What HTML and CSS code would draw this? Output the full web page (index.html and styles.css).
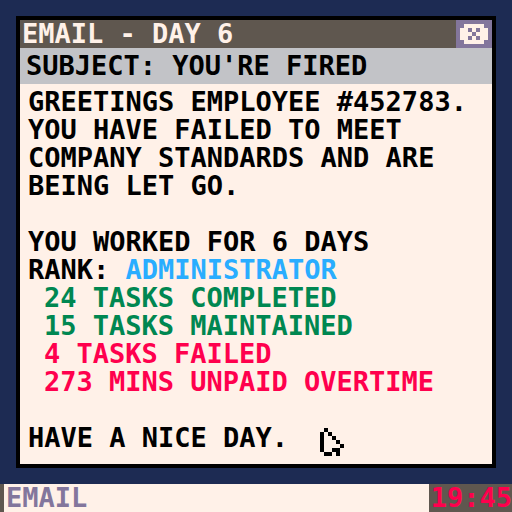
FILE: index.html
```
<!DOCTYPE html>
<html lang="en">
<head>
<meta charset="utf-8">
<title>Email - Day 6</title>
<link rel="stylesheet" href="styles.css">
</head>
<body>
<main class="desktop">
  <section class="window">
    <header class="titlebar">
      <h1 class="title">EMAIL - DAY 6</h1>
      <button class="close" type="button" aria-label="Close">
        <svg viewBox="0 0 7 5" width="28" height="20" shape-rendering="crispEdges" aria-hidden="true">
          <path fill="#fff1e8" d="M1 0h5v1h1v3h-1v1h-5v-1h-1v-3h1z"/>
          <path fill="#83769c" d="M2 1h1v1h-1zM4 1h1v1h-1zM3 2h1v1h-1zM2 3h1v1h-1zM4 3h1v1h-1z"/>
        </svg>
      </button>
    </header>
    <h2 class="subject">SUBJECT: YOU'RE FIRED</h2>
    <div class="message">
      <p>GREETINGS EMPLOYEE #452783.<br>YOU HAVE FAILED TO MEET<br>COMPANY STANDARDS AND ARE<br>BEING LET GO.</p>
      <div class="report">
        <p>YOU WORKED FOR 6 DAYS</p>
        <p>RANK: <span class="rank">ADMINISTRATOR</span></p>
        <ul class="stats">
          <li class="good">24 TASKS COMPLETED</li>
          <li class="good">15 TASKS MAINTAINED</li>
          <li class="bad">4 TASKS FAILED</li>
          <li class="bad">273 MINS UNPAID OVERTIME</li>
        </ul>
      </div>
      <p>HAVE A NICE DAY.</p>
    </div>
  </section>
  <svg class="cursor" viewBox="0 0 6 7" width="24" height="28" shape-rendering="crispEdges" aria-hidden="true">
    <path d="M1 0h1v1h-1zM0 1h1v5h-1zM2 1h1v1h-1zM3 2h1v1h-1zM4 3h1v1h-1zM5 4h1v1h-1zM3 5h2v2h-1v-1h-1zM1 6h2v1h-2z"/>
  </svg>
</main>
<footer class="taskbar">
  <span class="app">EMAIL</span>
  <time class="clock">19:45</time>
</footer>
</body>
</html>
```
FILE: styles.css
```
* {
  box-sizing: border-box;
  margin: 0;
  padding: 0;
}

body {
  min-height: 100vh;
  display: flex;
  flex-direction: column;
  background: #1d2b53;
  color: #000;
  font: bold 27px/28px "DejaVu Sans Mono", monospace;
  white-space: nowrap;
}

h1, h2 {
  font: inherit;
}

.desktop {
  position: relative;
  flex: 1;
  display: flex;
  padding: 16px;
}

.window {
  flex: 1;
  display: flex;
  flex-direction: column;
  min-width: 0;
  border: 4px solid #000;
  background: #fff1e8;
}

.titlebar {
  display: flex;
  justify-content: space-between;
  padding-left: 2px;
  background: #5f574f;
  color: #fff1e8;
}

.close {
  display: flex;
  padding: 4px;
  border: 0;
  background: #83769c;
}

.subject {
  padding: 4px 6px;
  background: #c2c3c7;
}

.message {
  display: flex;
  flex-direction: column;
  gap: 28px;
  padding: 4px 8px 12px;
}

.rank {
  color: #29adff;
}

.stats {
  list-style: none;
  padding-left: 16px;
}

.good {
  color: #008751;
}

.bad {
  color: #ff004d;
}

.cursor {
  position: absolute;
  left: 320px;
  top: 428px;
}

.taskbar {
  display: flex;
  justify-content: space-between;
  border-left: 4px solid #5f574f;
  background: #fff1e8;
  color: #83769c;
}

.app {
  padding-left: 2px;
}

.clock {
  padding-left: 2px;
  background: #5f574f;
  color: #ff004d;
}
```
